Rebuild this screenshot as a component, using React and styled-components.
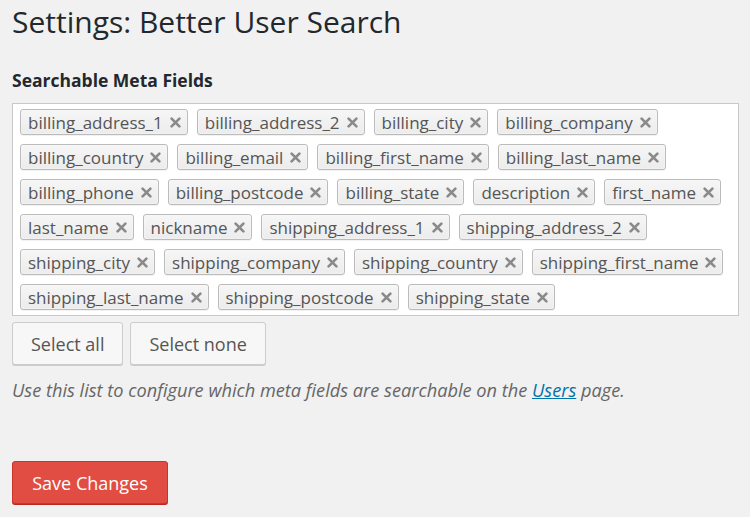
import styled, { createGlobalStyle } from 'styled-components';

// rows as they wrap in the select box
const fieldRows = [
  ['billing_address_1', 'billing_address_2', 'billing_city', 'billing_company'],
  ['billing_country', 'billing_email', 'billing_first_name', 'billing_last_name'],
  ['billing_phone', 'billing_postcode', 'billing_state', 'description', 'first_name'],
  ['last_name', 'nickname', 'shipping_address_1', 'shipping_address_2'],
  ['shipping_city', 'shipping_company', 'shipping_country', 'shipping_first_name'],
  ['shipping_last_name', 'shipping_postcode', 'shipping_state'],
];

const GlobalStyle = createGlobalStyle`
  html, body {
    margin: 0;
    padding: 0;
    background: #f1f1f1;
    font-family: "Open Sans", "Liberation Sans", sans-serif;
    color: #444;
  }
  * { box-sizing: border-box; }
`;

function RemoveIcon() {
  return (
    <svg width="11" height="11" viewBox="0 0 11 11">
      <path d="M1.6 1.6 L9.4 9.4 M9.4 1.6 L1.6 9.4" stroke="#8a8a8a" strokeWidth="2.6" strokeLinecap="round" />
    </svg>
  );
}

export default function App() {
  return (
    <StWrap>
      <GlobalStyle />
      <StTitle>Settings: Better User Search</StTitle>
      <StLabel>Searchable Meta Fields</StLabel>
      <StTagBox>
        {fieldRows.map((row, i) => (
          <StTagRow key={i}>
            {row.map((f) => (
              <StTag key={f}>
                <span>{f}</span>
                <RemoveIcon />
              </StTag>
            ))}
          </StTagRow>
        ))}
      </StTagBox>
      <StButtonRow>
        <StButton>Select all</StButton>
        <StButton>Select none</StButton>
      </StButtonRow>
      <StDesc>
        Use this list to configure which meta fields are searchable on the <a href="#">Users</a> page.
      </StDesc>
      <StPrimary>Save Changes</StPrimary>
    </StWrap>
  );
}

const StWrap = styled.div`
  width: 750px;
  height: 517px;
  padding: 0 11px 0 12px;
  overflow: hidden;
`;

const StTitle = styled.h1`
  margin: 0;
  padding: 3px 0 0;
  font-size: 30px;
  font-weight: 400;
  line-height: 38px;
  color: #23282d;
`;

const StLabel = styled.div`
  margin-top: 28px;
  font-size: 17.5px;
  font-weight: 700;
  line-height: 22px;
  color: #23282d;
`;

const StTagBox = styled.div`
  margin-top: 12px;
  background: #fff;
  border: 1px solid #c8c8c8;
  padding: 5px 7px;
  display: flex;
  flex-direction: column;
  gap: 9px;
  width: 727px;
`;

const StTagRow = styled.div`
  display: flex;
  gap: 9px;
`;

const StTag = styled.div`
  height: 26px;
  display: flex;
  align-items: center;
  gap: 7px;
  padding: 0 6px 0 7px;
  border: 1px solid #bbb;
  border-radius: 3px;
  background: linear-gradient(#f6f6f6, #ececec);
  box-shadow: 0 0 2px #fff inset, 0 1px 0 rgba(0, 0, 0, 0.05);
  font-size: 17px;
  color: #555;
  line-height: 1;
  white-space: nowrap;
  svg { flex: none; }
`;

const StButtonRow = styled.div`
  display: flex;
  gap: 7px;
  margin-top: 6px;
`;

const StButton = styled.button`
  height: 43px;
  padding: 0 18px;
  font-family: inherit;
  font-size: 18px;
  color: #555;
  background: #f7f7f7;
  border: 1px solid #ccc;
  border-radius: 3px;
  box-shadow: 0 1px 0 #ccc;
`;

const StDesc = styled.p`
  margin: 14px 0 0;
  font-size: 18.2px;
  font-style: italic;
  color: #666;
  line-height: 22px;
  a {
    color: #0073aa;
  }
`;

const StPrimary = styled.button`
  margin-top: 60px;
  height: 43px;
  width: 156px;
  font-family: inherit;
  font-size: 18px;
  color: #fff;
  background: #e14d43;
  border: 1px solid #c8352b;
  border-radius: 3px;
  box-shadow: 0 1px 0 #ba281e;
`;
